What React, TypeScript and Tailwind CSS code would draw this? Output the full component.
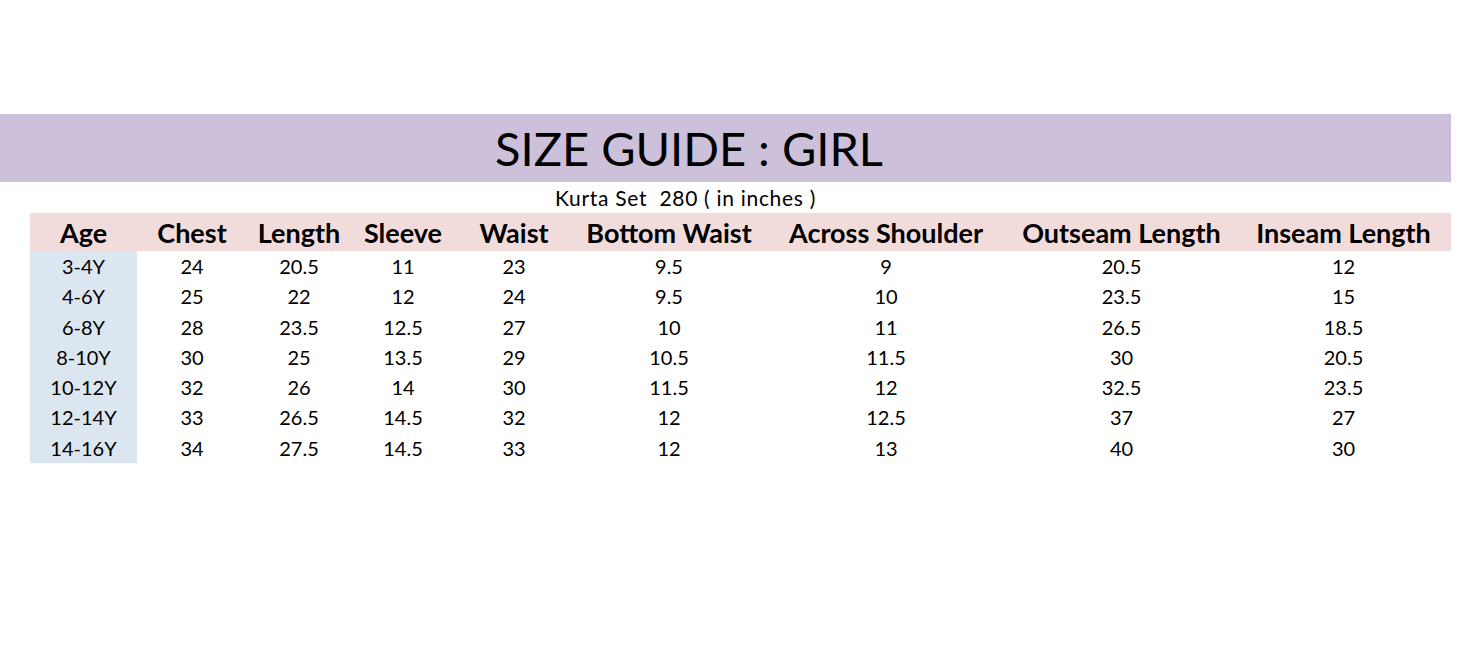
import React from "react";

const headers = ["Age","Chest","Length","Sleeve","Waist","Bottom Waist","Across Shoulder","Outseam Length","Inseam Length"];
const rows = [
  ["3-4Y","24","20.5","11","23","9.5","9","20.5","12"],
  ["4-6Y","25","22","12","24","9.5","10","23.5","15"],
  ["6-8Y","28","23.5","12.5","27","10","11","26.5","18.5"],
  ["8-10Y","30","25","13.5","29","10.5","11.5","30","20.5"],
  ["10-12Y","32","26","14","30","11.5","12","32.5","23.5"],
  ["12-14Y","33","26.5","14.5","32","12","12.5","37","27"],
  ["14-16Y","34","27.5","14.5","33","12","13","40","30"],
];

const grid = "grid grid-cols-[107px_110px_104px_104px_118px_192px_242px_229px_215px]";

export default function App() {
  return (
    <div className="w-[1475px] h-[653px] bg-white pt-[114px] text-black" style={{ fontFamily: "Lato, 'Open Sans', sans-serif" }}>
      <div className="w-[1451px] h-[68px] bg-[#ccc0da] flex items-center pl-[495px]">
        <span className="text-[47px] leading-none">SIZE GUIDE : GIRL</span>
      </div>
      <div className="h-[31px] flex items-center pl-[555px]">
        <span className="text-[21px] leading-none whitespace-pre tracking-[0.7px]">Kurta Set  280 ( in inches )</span>
      </div>
      <div className="ml-[30px] w-[1421px]">
        <div className={`${grid} h-[38px] bg-[#f2dcdb] items-center`}>
          {headers.map((h) => (
            <div key={h} className="text-center font-bold text-[27px] leading-none whitespace-nowrap">{h}</div>
          ))}
        </div>
        <div className={`${grid}`}>
          <div className="bg-[#dce6f1] row-span-7 col-start-1 row-start-1 h-[212px]" />
          {rows.map((r, ri) =>
            r.map((c, ci) => (
              <div
                key={`${ri}-${ci}`}
                className="h-[30px] flex items-center justify-center text-[20px] leading-none"
                style={{ gridRow: ri + 1, gridColumn: ci + 1 }}
              >
                {c}
              </div>
            ))
          )}
        </div>
      </div>
    </div>
  );
}
